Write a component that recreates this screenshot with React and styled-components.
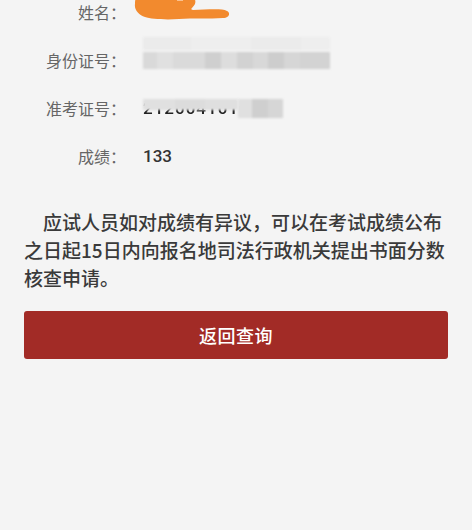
import React from "react"
import styled, {createGlobalStyle} from "styled-components"

const GlobalStyle = createGlobalStyle`
  html, body {
    margin: 0;
    padding: 0;
    background: #f4f4f4;
  }
  body {
    font-family: "Noto Sans CJK SC", "Noto Sans", sans-serif;
    overflow: hidden;
  }
`

const Page = styled.div`
  width: 472px;
  height: 530px;
  box-sizing: border-box;
  padding: 0 24px;
  background: #f4f4f4;
  overflow: hidden;
`

const InfoList = styled.div`
  margin-top: -12px;
  display: flex;
  flex-direction: column;
`

const Row = styled.div`
  display: flex;
  align-items: center;
  height: 48px;
`

const Label = styled.div`
  width: 102px;
  flex: none;
  text-align: right;
  font-size: 16px;
  color: #666;
  line-height: 24px;
`

const Value = styled.div`
  position: relative;
  margin-left: 17px;
  font-size: 17px;
  font-family: "Roboto", "Noto Sans CJK SC", sans-serif;
  font-weight: 500;
  color: #333;
  line-height: 24px;
  display: flex;
  align-items: center;
`

const Scribble = styled.svg`
  margin-left: -10px;
  margin-top: -10px;
  display: block;
`

const IdBlock = styled.div`
  display: flex;
  flex-direction: column;
  gap: 2px;
  margin-bottom: 14px;
  filter: blur(0.8px);
`

const Strip = styled.div`
  display: flex;
  height: ${(p) => p.$h}px;
`

const Cell = styled.div`
  width: ${(p) => p.$w}px;
  background: ${(p) => p.$c};
`

const Digits = styled.span`
  letter-spacing: 1px;
  color: #222;
  filter: blur(0.6px);
`

const Cover = styled.div`
  position: absolute;
  top: ${(p) => p.$top}px;
  left: ${(p) => p.$left}px;
  width: ${(p) => p.$w}px;
  height: ${(p) => p.$h}px;
  display: flex;
  filter: blur(0.8px);
`

const Notice = styled.p`
  margin: 28px 0 0;
  font-size: 19px;
  line-height: 28px;
  text-indent: 1em;
  color: #3a3a3a;
  font-weight: 500;
`

const BackButton = styled.button`
  display: block;
  width: 100%;
  height: 48px;
  margin-top: 19px;
  border: none;
  border-radius: 3px;
  background: #a22b26;
  color: #fff;
  font-family: "Noto Sans CJK SC", sans-serif;
  font-size: 18px;
  font-weight: 500;
  letter-spacing: 0.5px;
  cursor: pointer;
`

const idTop = [
  [48, "#ebebeb"], [60, "#eeeeee"], [50, "#ebebeb"], [29, "#eeeeee"],
]
const idBottom = [
  [14, "#d9d9d9"], [16, "#e0e0e0"], [32, "#dadada"], [16, "#cfcfcf"],
  [16, "#dddddd"], [16, "#d2d2d2"], [15, "#d8d8d8"], [16, "#cdcdcd"],
  [16, "#d6d6d6"], [30, "#d3d3d3"],
]
const examTop = [
  [32, "#e0e0e0"], [30, "#dcdcdc"], [33, "#dfdfdf"],
]
const examSide = [
  [14, "#e0e0e0"], [16, "#cfcfcf"], [15, "#d6d6d6"],
]

const Mosaic = ({cells}) =>
  cells.map(([w, c], i) => <Cell key={i} $w={w} $c={c} />)

export default function App() {
  return (
    <>
      <GlobalStyle />
      <Page>
        <InfoList>
          <Row>
            <Label>姓名：</Label>
            <Value>
              <Scribble width="100" height="30" viewBox="0 0 100 30">
                <path
                  d="M4 5 C10 0 30 -1 48 1 C58 2 64 6 62 12 C60 16 56 17 60 18 C72 18 88 16 94 19 C98 21 96 26 90 26 C76 27 60 26 46 27 C32 28 18 27 12 25 C6 23 1 18 2 12 C2 9 2 7 4 5 Z"
                  fill="#f28a2e"
                />
                <path d="M44 8 L50 8" stroke="#f9c08e" strokeWidth="2" />
              </Scribble>
            </Value>
          </Row>
          <Row>
            <Label>身份证号：</Label>
            <Value>
              <IdBlock>
                <Strip $h={13}>
                  <Mosaic cells={idTop} />
                </Strip>
                <Strip $h={17}>
                  <Mosaic cells={idBottom} />
                </Strip>
              </IdBlock>
            </Value>
          </Row>
          <Row>
            <Label>准考证号：</Label>
            <Value>
              <Digits>2120041010</Digits>
              <Cover $top={3} $left={0} $w={95} $h={11}>
                <Mosaic cells={examTop} />
              </Cover>
              <Cover $top={3} $left={95} $w={45} $h={19}>
                <Mosaic cells={examSide} />
              </Cover>
            </Value>
          </Row>
          <Row>
            <Label>成绩：</Label>
            <Value>133</Value>
          </Row>
        </InfoList>
        <Notice>
          应试人员如对成绩有异议，可以在考试成绩公布之日起15日内向报名地司法行政机关提出书面分数核查申请。
        </Notice>
        <BackButton>返回查询</BackButton>
      </Page>
    </>
  )
}
